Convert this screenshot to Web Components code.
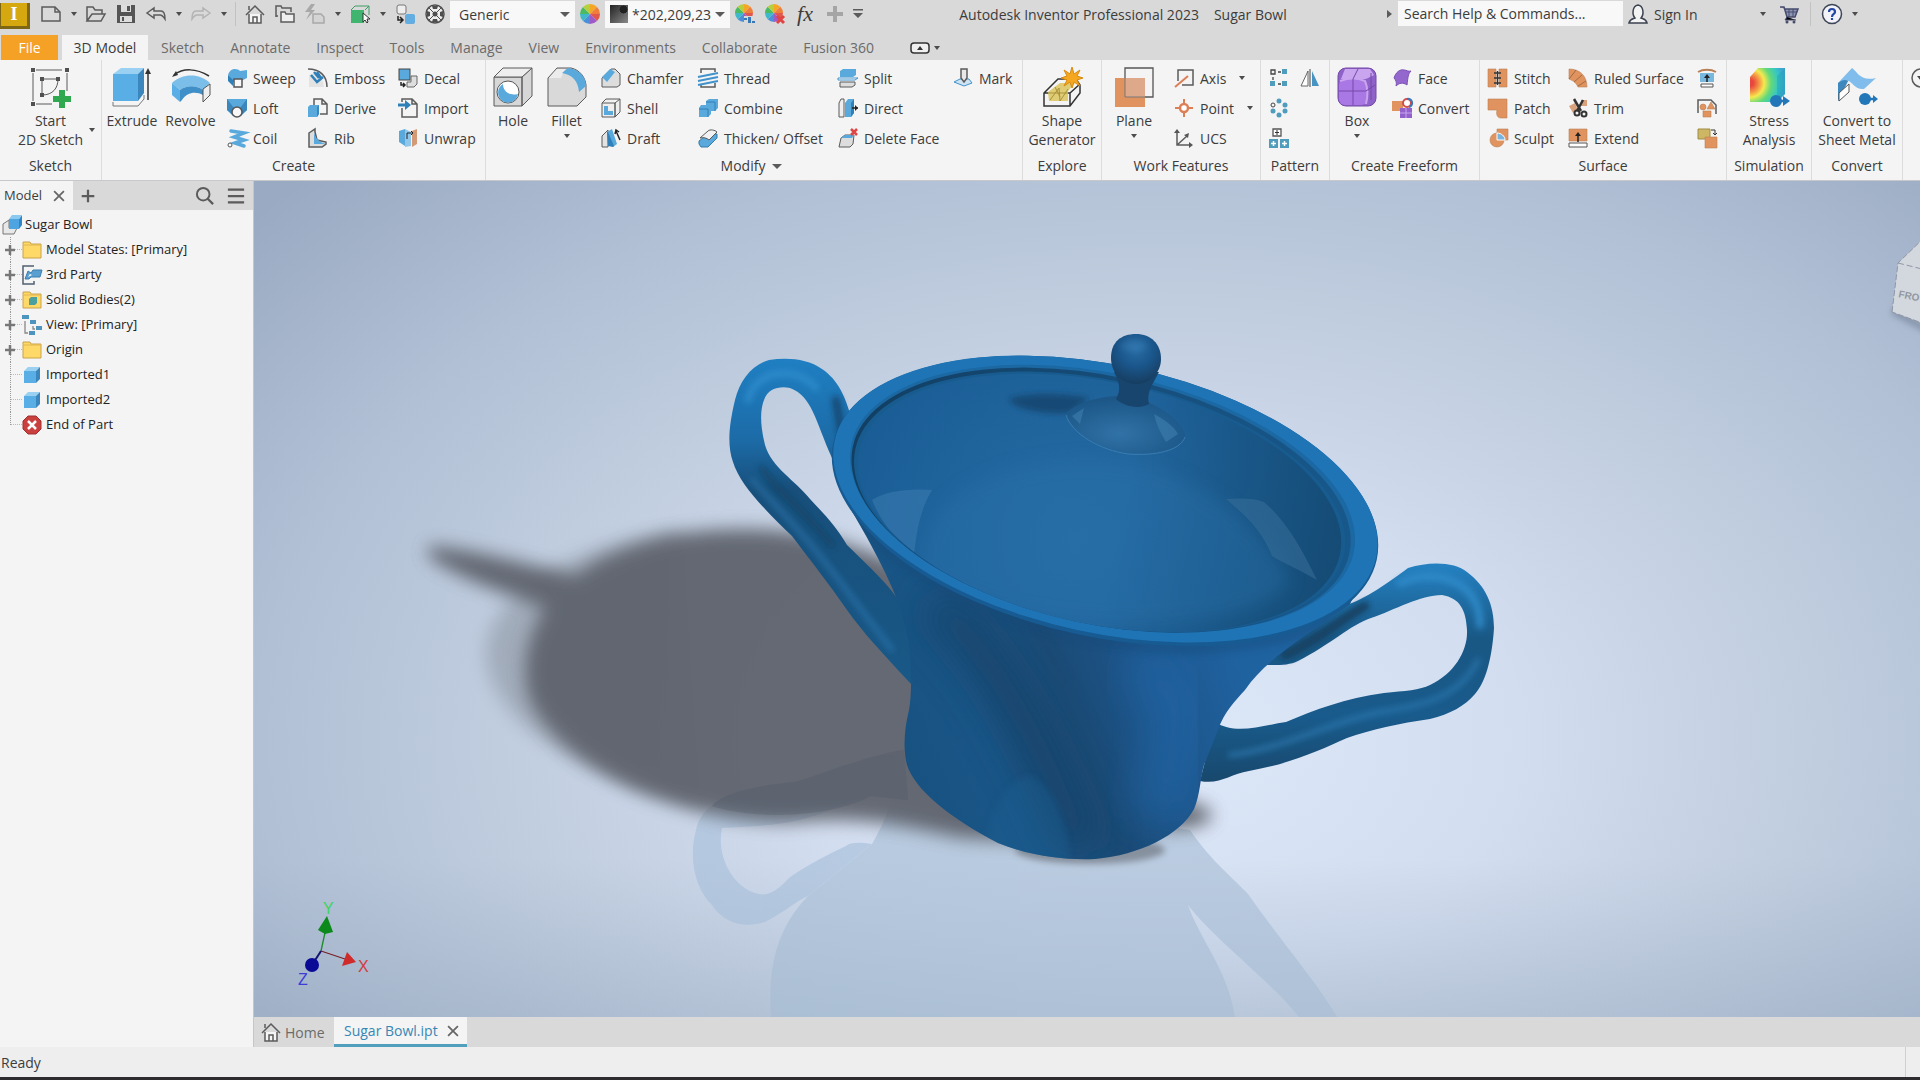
<!DOCTYPE html>
<html lang="en">
<head>
<meta charset="utf-8">
<title>Autodesk Inventor Professional 2023 - Sugar Bowl</title>
<style>
    html, body { margin: 0; height: 100%; }
    body {
        font: 14px/19px "Open Sans", "Noto Sans", sans-serif;
        color: #3c3c3c;
        background: #d9d9d9;
    }
</style>
</head>
<body>
<cad-app></cad-app>

<script>
const DARK = 'fill="none" stroke="#5b5b5b" stroke-width="1.5"';
const BLUE = 'fill="#5aa9dd"';
const ORANGE = 'fill="#e0935f" stroke="#b98056" stroke-width=".6"';

// colour wheel made of eight slices
const wheel = (cx, cy, r) => {
    const colors = ['#f5a623', '#ef7d3c', '#e2574c', '#a05ac8', '#4a90d9', '#3fb8c9', '#4cb963', '#b5cf3f'];
    return colors.map((color, i) => {
        const a = (i * Math.PI) / 4 - Math.PI / 2;
        const b = a + Math.PI / 4;
        return `<path fill="${color}" d="M${cx} ${cy}L${cx + r * Math.cos(a)} ${cy + r * Math.sin(a)}A${r} ${r} 0 0 1 ${cx + r * Math.cos(b)} ${cy + r * Math.sin(b)}Z"/>`;
    }).join('');
};

const cube = '<path fill="#5aaee6" d="M2 6h12v12H2z"/><path fill="#9ad0f2" d="M2 6l4-4h12l-4 4z"/><path fill="#3a86bd" d="M14 6l4-4v12l-4 4z"/>';
const folder = '<path d="M1 4.500V2h7l1 2h10v14H1z" fill="#ffd968" stroke="#c9a24a"/><path d="M1 5h18" stroke="#dfb551"/>';

// small icons are drawn on a 20 grid, the large ones on a 40 grid
const ICONS = {
    new: `<path ${DARK} fill="#f8f8f8" d="M1 3h13l5 5v9H1z"/><path ${DARK} d="M14 3v5h5"/>`,
    open: `<path ${DARK} d="M1 17V3h6l2 3h7v4M1 17l5-7h13l-4 7z"/>`,
    save: `<path fill="#555" d="M1 1h18v18H1z"/><path fill="#ddd" d="M5 1h10v7H5zM4 12h12v6H4z"/><path fill="#555" d="M11 2h3v5h-3zM6 13h2v4H6z"/>`,
    undo: `<path ${DARK} fill="#efefef" d="M1 9l7-5v3h7c3 0 4 3 4 8-2-3-3-4-5-4H8v3z"/>`,
    redo: `<g transform="matrix(-1 0 0 1 20 0)"><path fill="none" stroke="#b3b3b3" stroke-width="1.500" d="M1 9l7-5v3h7c3 0 4 3 4 8-2-3-3-4-5-4H8v3z"/></g>`,
    home: `<path fill="#f5f5f5" stroke="#5b5b5b" stroke-width="1.500" d="M4 10v9h12v-9"/><path ${DARK} stroke-width="2" d="M1 11l9-9 9 9"/><path ${DARK} d="M4 6V2M8 19v-6h4v6"/>`,
    folders: `<path ${DARK} d="M1 13V2h5l1 2h9v4M3 12H1"/><path fill="#eee" stroke="#5b5b5b" stroke-width="1.500" d="M6 18V8h4l1 2h8v8z"/>`,
    bolt: `<path fill="#a8a8a8" d="M6 0L0 8h5l-4 8 9-10H6l4-6z"/><path fill="#d4d4d4" stroke="#a8a8a8" stroke-width="1.500" d="M8 10h8l3 3v6H8z"/>`,
    select: `<path fill="#3fb56f" d="M1 6h13v13H1z"/><path fill="none" stroke="#3f9c65" d="M1 6l4-4h14l-4 4M5 2l-4 4M19 2v9"/><path fill="#fff" stroke="#333" d="M13 9v9l2-2 2 3 1-1-1-3h3z"/>`,
    swap: `<rect x="2" y="1" width="9" height="9" rx="2" fill="#eee" stroke="#777"/><rect x="10" y="10" width="10" height="10" rx="2" fill="#64ade0"/><path stroke="#222" stroke-width="1.500" fill="none" d="M3 12v4h4M5 13l3 3-3 3"/>`,
    mesh: `<circle cx="10" cy="10" r="9" fill="#eee" stroke="#4e4e4e" stroke-width="1.500"/><g fill="#4e4e4e"><circle cx="10" cy="10" r="2.500"/><path d="M7 2h6l-1 3H8zM7 18h6l-1-3H8zM2 7v6l3-1V8zM18 7v6l-3-1V8z"/></g><path stroke="#4e4e4e" d="M4 4l12 12M16 4L4 16"/>`,
    wheel: wheel(10, 10, 10),
    wheelAdjust: wheel(9, 9, 9) + '<path fill="#d9d9d9" d="M9 12h11v8H9z"/><path fill="#3878b8" d="M9 14h3v2H9zM13 13h3v6h-3zM17 17h3v2h-3z"/>',
    wheelClear: wheel(9, 9, 9) + '<path stroke="#e04545" stroke-width="3" d="M12 12l7 7M19 12l-7 7"/>',
    plus: '<path stroke="#a5a5a5" stroke-width="4" d="M10 2v16M2 10h16"/>',
    caret: '<path fill="#5b5b5b" d="M5 8h10l-5 5z"/>',
    smallCaret: '<path fill="#4c4c4c" d="M7 8h6l-3 4z"/>',
    barCaret: '<path fill="#5b5b5b" d="M5 5h10v1.500H5zM5 9h10l-5 5z"/>',
    sideCaret: '<path fill="#5b5b5b" d="M8 6v8l5-4z"/>',
    user: '<path fill="#f3f3f3" stroke="#3b4250" stroke-width="1.500" d="M1 19c1-4 4-4 6-5C4 11 4 2 10 1c6 1 6 10 3 13 2 1 5 1 6 5z"/>',
    cart: '<path fill="#8d95b5" stroke="#464c6c" stroke-width="1.500" d="M1 3h4l3 10h8l3-8H6"/><path stroke="#464c6c" d="M6 8h12M10 5v8M14 5v8M8 13l-2 3h11"/><circle cx="8" cy="18" r="1.500" fill="#464c6c"/><circle cx="15" cy="18" r="1.500" fill="#464c6c"/>',
    help: '<circle cx="10" cy="10" r="9.500" fill="#f1f3f8" stroke="#3d4456" stroke-width="1.500"/><path fill="none" stroke="#2446a5" stroke-width="2.200" d="M7 8c0-4 6-4 6 0 0 2-3 2-3 5M10 14v2"/>',
    collapse: '<rect x="1" y="5" width="18" height="10" rx="3" fill="#f0f0f0" stroke="#333" stroke-width="1.500"/><path fill="#333" d="M7 12h6l-3-4z"/>',
    close: '<path stroke="#666" stroke-width="2.500" d="M3 3l14 14M17 3L3 17"/>',
    add: '<path stroke="#5b5b5b" stroke-width="2.500" d="M10 3v14M3 10h14"/>',
    addNode: '<path stroke="#777" stroke-width="5" d="M10 0v20M0 10h20"/>',
    search: '<circle cx="8" cy="8" r="7" fill="none" stroke="#5b5b5b" stroke-width="2.200"/><path stroke="#5b5b5b" stroke-width="2.500" d="M13 13l6 6"/>',
    menu: '<path stroke="#5b5b5b" stroke-width="2.500" d="M1 3h18M1 10h18M1 17h18"/>',
    more: '<circle cx="12" cy="12" r="9" fill="#f4f4f4" stroke="#5b5b5b" stroke-width="1.500"/><path fill="#444" d="M8 10h8l-4 5z"/>',

    part: '<path fill="#e8e8e8" stroke="#777" d="M1 9l6-4v8h8l-3 6H1z"/><path fill="#4da4e0" d="M7 4h10v10H7z"/><path fill="#2f86c6" d="M17 4l3-4v10l-3 4z"/><path fill="#8ac8f0" d="M7 4l3-4h10l-3 4z"/>',
    folder,
    bodies: folder + '<path fill="#4c9f9f" d="M7 9l2-2h6v6l-2 2H7z"/>',
    party: '<path fill="none" stroke="#4f5f72" stroke-width="1.500" d="M12 1H1v18h11v-3"/><path fill="#5a9fd0" stroke="#3b7fae" d="M3 14l3-8 3 2 2-3h9l-2 7H9l-2 2z"/><path fill="#fff" d="M6 12l2-3 2 1z"/>',
    view: '<path fill="none" stroke="#888" stroke-width="1.300" d="M3 6v12h3M8 6h2M11 11v3h2"/><g fill="#4d94bf"><path d="M0 0h7v4H0zM8 5h6v4H8zM14 11h6v4h-6zM7 16h6v4H7z"/></g>',
    cube,
    end: '<path fill="#c9403f" stroke="#a23030" d="M6 1h8l5 5v8l-5 5H6l-5-5V6z"/><path stroke="#fff" stroke-width="2.500" d="M6 6l8 8M14 6l-8 8"/>',

    sketch: `<g fill="none" stroke="#5a5a5a"><path d="M6 3h26M3 6v28M6 37h16M37 6v18M12 12v16M12 12h16c0 9-5 16-16 16"/></g><g fill="#505050"><path d="M1 1h4v4H1zM35 1h4v4h-4zM1 35h4v4H1zM10 10h4v4h-4zM26 10h4v4h-4zM10 26h4v4h-4z"/></g><path stroke="#2fa84f" stroke-width="6" d="M32 23v18M23 32h18"/>`,
    extrude: '<path fill="#f4f4f4" stroke="#777" d="M1 35v4h25l6-7v-4"/><path fill="#5aaee6" d="M1 7h25v27H1z"/><path fill="#9ad0f2" d="M1 7l8-6h23l-6 6z"/><path fill="#3a86bd" d="M26 7l6-6v25l-6 8z"/><path stroke="#333" stroke-width="1.500" d="M36 5v28"/><path fill="#333" d="M33 7l3-6 3 6z"/>',
    revolve: '<path fill="#7cbeea" d="M1 16c10-10 28-10 38 0l-7 7c-7-5-16-5-23 0z"/><path fill="#5aaee6" d="M1 16l8 7v12l-8-7z"/><path fill="#3f8fc8" d="M9 23c7-5 16-5 23 0v5c-7-4-16-3-21 5l-2 2z"/><path fill="#eee" stroke="#555" d="M32 22l7-5v11l-7 7z"/><path fill="none" stroke="#333" stroke-width="1.500" d="M3 8c9-7 22-7 35 1"/><path fill="#333" d="M1 10l4-6 2 4z"/>',
    sweep: `<path ${BLUE} d="M1 7c2-7 9-7 12-4l7-1v8l-8 4H6z"/><path fill="#2f80b8" d="M1 7l5 5v6l-5-5z"/><rect x="7" y="11" width="8" height="8" fill="#f8f8f8" stroke="#555" stroke-width="1.500"/>`,
    loft: `<path ${BLUE} d="M0 1h20v11l-6 6H6l-6-6z"/><path fill="#3a86bd" d="M0 1l7 9v8l-7-6zM20 1l-7 9v8l7-6z"/><circle cx="10" cy="14" r="5" fill="#f8f8f8" stroke="#555" stroke-width="1.500"/>`,
    coil: '<g fill="none" stroke="#5aa9dd" stroke-width="3.500" stroke-linecap="round"><path d="M4 3l13 2-10 4 10 3-9 3 9 3"/></g><circle cx="3" cy="17" r="2" fill="#fff" stroke="#555"/>',
    emboss: `<path fill="#e3e3e3" d="M1 7c8-4 14 2 15 12H1z"/><path ${DARK} d="M0 1c12 0 19 7 19 18"/><path stroke="#2f80b8" stroke-width="2.500" fill="none" d="M3 7l6 7 6-5M6 4l5 6M9 4l4 6"/>`,
    derive: `<path ${DARK} fill="#fff" d="M6 8V1h8l5 5v10h-7M14 1v5h5"/><path ${BLUE} d="M0 9l2-2h9v9l-2 3H0z"/><path fill="#3a86bd" d="M9 9l2-2v9l-2 3z"/>`,
    rib: `<path fill="#ddd" stroke="#5b5b5b" stroke-width="1.500" d="M1 5l6-4v3l2 8 9 2v2l-4 3H1z"/><path ${BLUE} d="M6 4c1 6 5 10 12 12H6z"/>`,
    decal: `<rect x="1" y="1" width="11" height="11" ${BLUE} stroke="#444"/><path fill="#dedede" stroke="#666" d="M13 8h6v8l-3 3H9v-5h4z"/><path fill="none" stroke="#222" stroke-width="1.500" d="M3 14v3h4M5 15l2 2-2 2"/>`,
    import: `<path ${DARK} fill="#fff" d="M4 10v9h15V6l-5-5H4v3M14 1v5h5"/><path stroke="#2f80b8" stroke-width="3" d="M0 7h8"/><path fill="#2f80b8" d="M7 2l6 5-6 5z"/>`,
    unwrap: '<path fill="#5aa9dd" d="M1 3l6-2v17l-6-4z"/><path fill="#8fc6ea" d="M7 1l6 3v14l-6 1z"/><path fill="#d39a78" d="M14 3l5-2v15l-5 3z"/><path fill="none" stroke="#222" d="M9 11V5h6M13 3l2 2-2 2"/>',
    hole: '<path fill="#d7d7d7" stroke="#5b5b5b" d="M1 10h28v29H1zM29 10L39 1v28l-10 10z"/><path fill="#eee" stroke="#5b5b5b" d="M1 10l9-9h29l-10 9z"/><circle cx="15" cy="25" r="11" fill="#fff" stroke="#555"/><path fill="#5aa9dd" d="M10 17a10 10 0 1 0 15 10c-8 2-15-2-15-10z"/>',
    fillet: '<path fill="#d9d9d9" stroke="#5b5b5b" d="M1 11l9-10h14c9 2 14 9 15 17v12l-9 9H1z"/><path fill="#ececec" d="M2 11l8-9h8l-4 9z"/><path fill="#5aa9dd" d="M15 6l6-5c11 1 18 9 18 18l-7 6C31 14 26 8 15 6z"/>',
    chamfer: '<path fill="#ddd" stroke="#5b5b5b" d="M1 10l9-9h4l5 5v11l-3 2H1z"/><path fill="#5aa9dd" d="M1 9l8-8 5 3-8 10z"/>',
    shell: '<path fill="#efefef" stroke="#5b5b5b" d="M1 5h13v14H1zM1 5l4-4h14v13l-5 5V5l5-4"/><path fill="#5aa9dd" d="M3 8h4v5h5v4H3z"/>',
    draft: '<path fill="#e3e3e3" stroke="#5b5b5b" d="M1 19V8l6-6v17z"/><path fill="#5aa9dd" d="M6 4l5-3 5 15-4 3z"/><path fill="#2f80b8" d="M6 4l1 0 6 14-1 1-5-1z"/><path stroke="#222" stroke-width="1.500" fill="none" d="M19 12l-4-9m-1 3l1-4 3 2"/>',
    thread: '<path fill="none" stroke="#5b5b5b" stroke-width="1.500" d="M3 5V1h14v3M3 16v3h14v-4"/><path stroke="#3f92cb" stroke-width="2" d="M0 9l20-4M0 13l20-4M0 17l20-4"/>',
    combine: '<path fill="#5aa9dd" d="M8 3l3-2h9v9l-3 3h-4v3l-3 3H1v-9l2-3h5z"/><path fill="none" stroke="#2f80b8" d="M8 4h9v9M1 11h9v8"/>',
    thicken: '<path fill="#5aa9dd" stroke="#377ba8" d="M1 13l9-7h9v4l-9 9H3l-2-3z"/><path fill="#f2f2f2" stroke="#5b5b5b" d="M2 10l8-7c2-2 7-1 9 1l-8 8c-2-2-6-3-9-2z"/>',
    split: '<path fill="#5aa9dd" d="M2 3l3-2h13v6l-3 2H2z"/><path stroke="#3f92cb" fill="#fff" d="M0 10h20l-3 2H0z"/><path fill="#ddd" stroke="#5b5b5b" d="M2 14h15v3l-3 2H2z"/>',
    direct: '<path fill="#eee" stroke="#5b5b5b" d="M6 1H3L1 5v14h5z"/><path fill="#5aa9dd" d="M7 5l3-4h6v14l-3 4H7z"/><path fill="#2f80b8" d="M13 5l3-4v14l-3 4z"/><path stroke="#222" stroke-width="1.500" d="M14 10h6"/><path fill="#222" d="M17 7l3 3-3 3z"/>',
    deleteFace: '<path fill="#ddd" stroke="#5b5b5b" d="M3 10l4-3h9l-1 9-3 3H1z"/><path fill="#5aa9dd" d="M3 10l4-3h9l-2 3z"/><path stroke="#e04545" stroke-width="2.500" d="M13 1l6 6M19 1l-6 6"/>',
    mark: '<path fill="#cfe4f3" stroke="#3f92cb" d="M1 14l6-3h9l3 4-8 3z"/><path fill="#e8e8e8" stroke="#5b5b5b" stroke-width="1.500" d="M8 1h6v9l-3 4-3-4z"/>',
    shape: '<path fill="none" stroke="#333" stroke-width="1.500" d="M2 26l14-14h18l4 6v8L28 39H2zM2 26h26l10-9M28 26v13"/><path fill="#d9c255" opacity=".8" d="M6 25l12-9h15l-7 8v10H7z"/><path fill="none" stroke="#a99238" d="M8 33l9-12 1 13 8-12M13 20l5 10"/><path fill="#f5a81f" stroke="#d98b10" d="M30 0l2 7 6-4-3 6 6 2-6 2 3 6-6-4-2 6-2-6-6 4 3-6-6-2 6-2-3-6 6 4z"/>',
    plane: '<path fill="none" stroke="#555" stroke-width="1.300" d="M11 11V1h28v29h-8"/><path fill="#e0935f" d="M1 11h30v29H1z"/><path fill="#dda98a" d="M11 11h20v19H11z"/><path fill="none" stroke="#777" d="M11 11v19h20"/>',
    axis: `<path ${DARK} d="M4 13V2h15v15H8"/><path stroke="#dd7f55" stroke-width="2" d="M1 19L14 8"/>`,
    point: '<circle cx="10" cy="10" r="4" fill="#fff" stroke="#dd7f55" stroke-width="2.500"/><path stroke="#dd7f55" stroke-width="2" d="M10 1v5M10 14v5M1 10h5M14 10h5"/>',
    ucs: `<path ${DARK} d="M3 3v14h14M3 17L13 8"/><path fill="#555" d="M0 5l3-4 3 4zM15 14l4 3-4 3zM10 7l5-2-1 5z"/>`,
    patternRect: '<path fill="none" stroke="#444" stroke-width="1.300" d="M2 2h4v4H2zM9 4h3M4 9v3M9 16h3"/><g fill="#4f9cbc"><path d="M13 1h5v5h-5zM1 13h5v5H1zM13 13h5v5h-5z"/></g>',
    patternCircle: '<circle cx="4" cy="7" r="2" fill="none" stroke="#444"/><g fill="#4f9cbc"><circle cx="10" cy="3" r="2.500"/><circle cx="16" cy="7" r="2.500"/><circle cx="16" cy="13" r="2.500"/><circle cx="10" cy="17" r="2.500"/><circle cx="4" cy="13" r="2.500"/></g>',
    patternSketch: '<path fill="#fff" stroke="#555" stroke-width="1.300" d="M4 1h8v7H4z"/><path stroke="#333" d="M8 2v5M6 4.500h4"/><path fill="#4f9cbc" d="M0 11h9v9H0zM11 11h9v9h-9z"/><path stroke="#fff" stroke-width="1.500" d="M4.500 13v5M2 15.500h5M15.500 13v5M13 15.500h5"/>',
    mirror: '<path fill="#fff" stroke="#666" d="M8 3v15H1z"/><path fill="#4794c2" d="M12 3v15h7z"/><path stroke="#444" d="M10 1v18"/>',
    box: '<rect x="1" y="1" width="38" height="38" rx="8" fill="#8f62c9" stroke="#7448a8"/><path fill="#c9a5ef" d="M8 2h25l4 6-8 4H4z"/><rect x="2" y="12" width="28" height="26" rx="6" fill="#aa78e4"/><path fill="none" stroke="#c9a5ef" stroke-width="2" d="M3 14c8-3 18-3 25 0 3 7 3 15 1 23"/><path fill="none" stroke="#7448a8" d="M16 12v26M2 24h27l9-6M16 12l5-10M34 6v27"/>',
    face: '<path fill="#9467cf" stroke="#7b52b3" d="M2 10C4 4 8 1 12 2c3 0 4 2 7 1-3 3-3 6-4 14-4-3-8-2-11 1 1-3 0-6-2-8z"/>',
    convert: '<path fill="#e0935f" d="M0 3h11v10H0z"/><path fill="#9261cb" d="M8 10h12v10H8z"/><path stroke="#c9a5ef" d="M14 10v10M8 15h12"/><circle cx="15" cy="5" r="4" fill="#fff" stroke="#d24d4d" stroke-width="2"/><path fill="none" stroke="#3878b8" stroke-width="2" d="M15 1a4 4 0 0 1 2 8"/>',
    stitch: `<path ${ORANGE} d="M0 1h8v18H0zM11 1h8v18h-8z"/><path stroke="#333" stroke-width="1.300" d="M9.500 3v14M6 5h7M6 10h7M6 15h7"/>`,
    patch: `<path ${ORANGE} d="M0 1h19v19h-6c-4 0-5-4-4-8H0z"/>`,
    sculpt: `<path ${ORANGE} d="M9 1h11v11h-4a7 7 0 1 1-7-7z"/><path fill="#79b4de" stroke="#fff" d="M9 5v7h8c0-4-4-7-8-7z"/>`,
    ruled: `<path ${ORANGE} d="M1 1c11 0 18 7 18 18h-9C8 15 6 13 1 11z"/><path fill="none" stroke="#a36b40" d="M1 11L8 2M6 14l8-7M10 18l8-5"/>`,
    trim: '<path fill="#d9a27c" d="M1 8l6-3 3 7-5 3zM13 2h6v6h-6z"/><path stroke="#333" stroke-width="2.500" d="M6 1l7 12M15 2L9 13"/><circle cx="9" cy="15" r="2.500" fill="none" stroke="#333" stroke-width="2"/><circle cx="16" cy="16" r="2.500" fill="none" stroke="#333" stroke-width="2"/>',
    extend: `<path ${ORANGE} d="M1 1h18v12H1z"/><path fill="#fff" stroke="#555" d="M1 15h18v4H1z"/><path stroke="#222" stroke-width="1.500" d="M10 14V6"/><path fill="#222" d="M7 8l3-4 3 4z"/>`,
    offsetUp: '<path fill="none" stroke="#b98056" stroke-width="2" d="M1 4c5-3 13-3 18 0"/><path fill="#78b7de" d="M3 5h14v9H3z"/><path fill="#fff" stroke="#555" d="M4 16h12v3H4z"/><path stroke="#222" stroke-width="1.500" d="M10 14V8"/><path fill="#222" d="M7 10l3-4 3 4z"/>',
    repair: `<path ${DARK} d="M1 15V2h13l5 5v9"/><circle cx="6" cy="9" r="3" ${ORANGE}/><path ${ORANGE} d="M10 11l4-7 4 7zM6 13h8v6H6z"/>`,
    replace: `<path fill="#cdb765" stroke="#a08c45" d="M1 1h12v10H1z"/><path ${ORANGE} d="M8 9h12v11H8z"/><path fill="none" stroke="#333" d="M14 2h4v5M16 5l2 2 2-2"/>`,
    stress: `<radialGradient id="heat" gradientUnits="userSpaceOnUse" cx="1" cy="16" r="34">
            <stop offset=".1" stop-color="#e8473d"/><stop offset=".28" stop-color="#f59b45"/><stop offset=".42" stop-color="#f4e94f"/>
            <stop offset=".62" stop-color="#62d97a"/><stop offset=".85" stop-color="#35c6c6"/><stop offset="1" stop-color="#3fa6d0"/>
        </radialGradient>
        <path fill="url(#heat)" d="M1 10l8-9h27v26l-8 8H1z"/><path fill="#1f9fb5" opacity=".45" d="M28 9l8-8v26l-8 8z"/><circle cx="27" cy="34" r="6" fill="#2277b8"/><path stroke="#2277b8" stroke-width="2.500" d="M30 34h7"/><path fill="#2277b8" d="M34 29l7 5-7 5z"/>`,
    sheet: '<path fill="#80bdec" d="M1 16L15 1c5 3 8 14 24 10L27 22c-9 1-11-7-16-8L1 34z"/><path fill="#3f88bd" d="M1 16c4-3 7-4 10-2L1 34z"/><path fill="#fff" stroke="#555" d="M2 26l10-9v8L2 34z"/><circle cx="28" cy="32" r="6" fill="#2277b8"/><path stroke="#2277b8" stroke-width="2.500" d="M30 32h8"/><path fill="#2277b8" d="M36 28l5 4-5 4z"/>',
};

class CadIcon extends HTMLElement {
    constructor() {
        super();
        this.attachShadow({ mode: 'open' });
    }

    connectedCallback() {
        const grid = this.hasAttribute('large') ? 40 : 20;
        this.shadowRoot.innerHTML = `
            <style>
                :host { display: block; flex: none; width: ${grid}px; height: ${grid}px; }
                svg { display: block; width: 100%; height: 100%; overflow: visible; }
            </style>
            <svg viewBox="0 0 ${grid} ${grid}" aria-hidden="true">${ICONS[this.getAttribute('name')]}</svg>
        `;
    }
}

class CadTool extends HTMLElement {
    constructor() {
        super();
        this.attachShadow({ mode: 'open' });
    }

    connectedCallback() {
        const icon = this.getAttribute('icon');
        const large = this.hasAttribute('large');
        const menu = this.getAttribute('menu');
        const hint = this.getAttribute('hint');
        this.shadowRoot.innerHTML = `
            <style>
                :host { display: flex; min-width: 0; }
                button {
                    flex: 1;
                    min-width: 0;
                    display: flex;
                    align-items: center;
                    gap: 6px;
                    padding: 0 0 0 8px;
                    border: 0;
                    background: none;
                    font: inherit;
                    color: inherit;
                    text-align: left;
                    white-space: nowrap;
                }
                button.large {
                    display: grid;
                    grid-template-columns: minmax(0, 1fr) auto minmax(0, 1fr);
                    grid-template-rows: 40px auto;
                    align-content: start;
                    justify-items: center;
                    gap: 4px 0;
                    padding: 4px 0 0;
                    text-align: center;
                }
                .large cad-icon:first-child, .large .label { grid-column: 2; }
                .large .side { grid-column: 3; align-self: center; }
                .large .below { grid-column: 2; margin-top: -8px; }
            </style>
            <button class="${large ? 'large' : ''}" ${hint ? `aria-label="${hint}"` : ''}>
                <cad-icon name="${icon}" ${large ? 'large' : ''}></cad-icon>
                ${hint ? '' : '<span class="label"><slot></slot></span>'}
                ${menu ? `<cad-icon class="${menu}" name="smallCaret"></cad-icon>` : ''}
            </button>
        `;
    }
}

class CadPanel extends HTMLElement {
    constructor() {
        super();
        this.attachShadow({ mode: 'open' });
    }

    connectedCallback() {
        this.shadowRoot.innerHTML = `
            <style>
                :host { display: flex; flex-direction: column; flex: none; padding-top: 3px; border-right: 1px solid #dcdcdc; }
                .tools {
                    display: grid;
                    grid-auto-flow: column;
                    grid-template-rows: repeat(3, 30px);
                    grid-template-columns: ${this.getAttribute('columns')};
                }
                ::slotted([large]) { grid-row: span 3; }
                footer { display: flex; align-items: center; justify-content: center; gap: 2px; height: 25px; }
            </style>
            <div class="tools"><slot></slot></div>
            <footer>${this.getAttribute('label')}${this.hasAttribute('menu') ? '<cad-icon name="caret"></cad-icon>' : ''}</footer>
        `;
    }
}

class CadRibbon extends HTMLElement {
    constructor() {
        super();
        this.attachShadow({ mode: 'open' });
    }

    connectedCallback() {
        this.shadowRoot.innerHTML = `
            <style>
                :host { display: flex; height: 120px; overflow: hidden; background: #f4f4f4; border-bottom: 1px solid #c6c8cc; }
                cad-icon[name=more] { margin: 6px 0 0 6px; }
            </style>
            <cad-panel label="Sketch" columns="101px">
                <cad-tool icon="sketch" large menu="side">Start<br>2D Sketch</cad-tool>
            </cad-panel>
            <cad-panel label="Create" columns="60px 57px 81px 90px 95px">
                <cad-tool icon="extrude" large>Extrude</cad-tool>
                <cad-tool icon="revolve" large>Revolve</cad-tool>
                <cad-tool icon="sweep">Sweep</cad-tool>
                <cad-tool icon="loft">Loft</cad-tool>
                <cad-tool icon="coil">Coil</cad-tool>
                <cad-tool icon="emboss">Emboss</cad-tool>
                <cad-tool icon="derive">Derive</cad-tool>
                <cad-tool icon="rib">Rib</cad-tool>
                <cad-tool icon="decal">Decal</cad-tool>
                <cad-tool icon="import">Import</cad-tool>
                <cad-tool icon="unwrap">Unwrap</cad-tool>
            </cad-panel>
            <cad-panel label="Modify" menu columns="54px 53px 97px 140px 115px 77px">
                <cad-tool icon="hole" large>Hole</cad-tool>
                <cad-tool icon="fillet" large menu="below">Fillet</cad-tool>
                <cad-tool icon="chamfer">Chamfer</cad-tool>
                <cad-tool icon="shell">Shell</cad-tool>
                <cad-tool icon="draft">Draft</cad-tool>
                <cad-tool icon="thread">Thread</cad-tool>
                <cad-tool icon="combine">Combine</cad-tool>
                <cad-tool icon="thicken">Thicken/ Offset</cad-tool>
                <cad-tool icon="split">Split</cad-tool>
                <cad-tool icon="direct">Direct</cad-tool>
                <cad-tool icon="deleteFace">Delete Face</cad-tool>
                <cad-tool icon="mark">Mark</cad-tool>
            </cad-panel>
            <cad-panel label="Explore" columns="78px">
                <cad-tool icon="shape" large>Shape<br>Generator</cad-tool>
            </cad-panel>
            <cad-panel label="Work Features" columns="64px 94px">
                <cad-tool icon="plane" large menu="below">Plane</cad-tool>
                <cad-tool icon="axis" menu="after">Axis</cad-tool>
                <cad-tool icon="point" menu="after">Point</cad-tool>
                <cad-tool icon="ucs">UCS</cad-tool>
            </cad-panel>
            <cad-panel label="Pattern" columns="31px 37px">
                <cad-tool icon="patternRect" hint="Rectangular"></cad-tool>
                <cad-tool icon="patternCircle" hint="Circular"></cad-tool>
                <cad-tool icon="patternSketch" hint="Sketch Driven"></cad-tool>
                <cad-tool icon="mirror" hint="Mirror"></cad-tool>
            </cad-panel>
            <cad-panel label="Create Freeform" columns="54px 95px">
                <cad-tool icon="box" large menu="below">Box</cad-tool>
                <cad-tool icon="face">Face</cad-tool>
                <cad-tool icon="convert">Convert</cad-tool>
            </cad-panel>
            <cad-panel label="Surface" columns="80px 129px 37px">
                <cad-tool icon="stitch">Stitch</cad-tool>
                <cad-tool icon="patch">Patch</cad-tool>
                <cad-tool icon="sculpt">Sculpt</cad-tool>
                <cad-tool icon="ruled">Ruled Surface</cad-tool>
                <cad-tool icon="trim">Trim</cad-tool>
                <cad-tool icon="extend">Extend</cad-tool>
                <cad-tool icon="offsetUp" hint="Thicken"></cad-tool>
                <cad-tool icon="repair" hint="Repair Bodies"></cad-tool>
                <cad-tool icon="replace" hint="Replace Face"></cad-tool>
            </cad-panel>
            <cad-panel label="Simulation" columns="84px">
                <cad-tool icon="stress" large>Stress<br>Analysis</cad-tool>
            </cad-panel>
            <cad-panel label="Convert" columns="90px">
                <cad-tool icon="sheet" large>Convert to<br>Sheet Metal</cad-tool>
            </cad-panel>
            <cad-icon name="more"></cad-icon>
        `;
    }
}

class CadTitleBar extends HTMLElement {
    constructor() {
        super();
        this.attachShadow({ mode: 'open' });
    }

    connectedCallback() {
        const icon = (name, label) => `<button class="icon" aria-label="${label}"><cad-icon name="${name}"></cad-icon></button>`;
        const drop = (label) => `<button class="drop" aria-label="${label}"><cad-icon name="smallCaret"></cad-icon></button>`;
        this.shadowRoot.innerHTML = `
            <style>
                :host { display: flex; align-items: flex-start; height: 35px; background: #d9d9d9; }
                .group { display: flex; align-items: center; height: 28px; }
                button { display: flex; align-items: center; justify-content: center; padding: 0; border: 0; background: none; font: inherit; color: inherit; }
                .icon { width: 30px; height: 28px; }
                .drop { width: 15px; height: 28px; }
                .logo {
                    width: 26px; height: 23px; margin: 3px 6px 0 0;
                    border: solid #7d6614; border-width: 0 3px 3px 1px;
                    background: #d6a80f; color: #fff;
                    font: bold 18px/23px "Liberation Serif", serif; text-align: center;
                }
                i { width: 1px; height: 24px; margin: 0 4px; background: #c2c2c2; }
                .end i { margin: 0 6px; }
                .field { display: flex; align-items: center; width: 125px; height: 27px; background: #f8f8f8; box-sizing: border-box; padding-left: 9px; }
                .field.swatch { padding-left: 5px; gap: 4px; }
                .field cad-icon { margin-left: -6px; }
                .swatch cad-icon { margin-left: -12px; }
                .swatch span { width: 18px; height: 18px; background: radial-gradient(circle at 75% 25%, #222 20%, transparent 22%), linear-gradient(135deg, #222, #8a8a8a); }
                select { flex: 1; min-width: 0; appearance: none; border: 0; padding: 0; background: none; font: inherit; color: inherit; }
                .fx { font: italic 22px/24px "Liberation Serif", serif; }
                h1 { flex: 1; display: flex; justify-content: center; gap: 15px; margin: 0; font: inherit; line-height: 29px; white-space: nowrap; }
                input { width: 225px; height: 25px; margin: 0 0 2px 2px; box-sizing: border-box; border: 0; padding: 0 6px; background: #f8f8f8; font: inherit; }
                input::placeholder { color: #3c3c3c; opacity: 1; }
                .sign { width: 132px; justify-content: flex-start; gap: 6px; padding-left: 5px; box-sizing: border-box; }
                .end { padding-right: 58px; }
                .end .drop:has(+ .icon) { margin-right: 4px; }
            </style>
            <div class="group">
                <div class="logo">I</div>
                ${icon('new', 'New')}${drop('New options')}
                ${icon('open', 'Open')}${icon('save', 'Save')}
                ${icon('undo', 'Undo')}${drop('Undo history')}
                ${icon('redo', 'Redo')}${drop('Redo history')}
                <i></i>
                ${icon('home', 'Home')}${icon('folders', 'Projects')}
                ${icon('bolt', 'Update')}${drop('Update options')}
                ${icon('select', 'Select')}${drop('Select options')}
                ${icon('swap', 'Material')}${icon('mesh', 'Appearance')}
                <label class="field"><select aria-label="Material"><option>Generic</option></select><cad-icon name="caret"></cad-icon></label>
                ${icon('wheel', 'Appearance browser')}
                <label class="field swatch"><span></span><select aria-label="Appearance"><option>*202,209,23</option></select><cad-icon name="caret"></cad-icon></label>
                ${icon('wheelAdjust', 'Adjust')}${icon('wheelClear', 'Clear')}
                <button class="icon fx">fx</button>
                ${icon('plus', 'Add')}
                <button class="drop" aria-label="Customize"><cad-icon name="barCaret"></cad-icon></button>
            </div>
            <h1><span>Autodesk Inventor Professional 2023</span><span>Sugar Bowl</span></h1>
            <div class="group end">
                <button class="drop" aria-label="Expand"><cad-icon name="sideCaret"></cad-icon></button>
                <input type="search" aria-label="Search" placeholder="Search Help &amp; Commands...">
                <button class="sign"><cad-icon name="user"></cad-icon>Sign In</button>
                ${drop('Account')}${icon('cart', 'Store')}
                <i></i>
                ${icon('help', 'Help')}${drop('Help options')}
            </div>
        `;
    }
}

class CadTabs extends HTMLElement {
    constructor() {
        super();
        this.attachShadow({ mode: 'open' });
    }

    connectedCallback() {
        const tabs = ['Sketch', 'Annotate', 'Inspect', 'Tools', 'Manage', 'View', 'Environments', 'Collaborate', 'Fusion 360'];
        this.shadowRoot.innerHTML = `
            <style>
                :host { display: flex; align-items: stretch; height: 25px; padding-left: 1px; background: #d9d9d9; }
                button { display: flex; align-items: center; border: 0; padding: 0 13px; background: none; font: inherit; color: #6b6b6b; white-space: nowrap; }
                .file { width: 57px; justify-content: center; margin-right: 4px; background: #f5a125; color: #fff; }
                .active { width: 86px; padding: 0; justify-content: center; background: #f4f4f4; color: #3c3c3c; }
                .collapse { padding: 0 0 0 23px; }
                .collapse cad-icon + cad-icon { margin-left: -3px; }
            </style>
            <button class="file">File</button>
            <button class="active">3D Model</button>
            ${tabs.map((tab) => `<button>${tab}</button>`).join('')}
            <button class="collapse" aria-label="Minimize ribbon"><cad-icon name="collapse"></cad-icon><cad-icon name="smallCaret"></cad-icon></button>
        `;
    }
}

class CadBrowser extends HTMLElement {
    constructor() {
        super();
        this.attachShadow({ mode: 'open' });
    }

    connectedCallback() {
        const nodes = [
            ['folder', 'Model States: [Primary]', true],
            ['party', '3rd Party', true],
            ['bodies', 'Solid Bodies(2)', true],
            ['view', 'View: [Primary]', true],
            ['folder', 'Origin', true],
            ['cube', 'Imported1'],
            ['cube', 'Imported2'],
            ['end', 'End of Part'],
        ];
        this.shadowRoot.innerHTML = `
            <style>
                :host { display: block; background: #f4f4f4; font-size: 13px; color: #222; }
                header { display: flex; align-items: center; height: 29px; background: #d9d9d9; }
                button { display: flex; align-items: center; border: 0; padding: 0; background: none; }
                header div { display: flex; align-items: center; gap: 10px; width: 73px; height: 29px; padding-left: 4px; box-sizing: border-box; background: #f4f4f4; color: #3c3c3c; }
                header cad-icon { width: 18px; height: 18px; }
                header div cad-icon { width: 14px; height: 14px; }
                .add { margin: 0 auto 0 6px; }
                .find { margin-right: 13px; }
                .list { margin-right: 8px; }
                .root { display: flex; align-items: center; gap: 3px; height: 25px; padding: 2px 0 0 2px; }
                ul { margin: 0; padding: 0; list-style: none; }
                li { display: flex; align-items: center; height: 25px; }
                /* dotted guide lines joining the nodes */
                li::before { content: ""; width: 12px; height: 25px; margin-left: 10px; box-sizing: border-box; border-left: 1px dotted #999; background: linear-gradient(90deg, #bbb 50%, transparent 50%) 0 12px / 2px 1px repeat-x; }
                li:last-child::before { height: 13px; align-self: flex-start; }
                li cad-icon { width: 20px; height: 20px; margin-right: 4px; }
                li button { width: 10px; margin: 0 7px 0 -17px; }
                li button cad-icon { width: 10px; height: 10px; margin: 0; }
            </style>
            <header>
                <div>Model<button aria-label="Close"><cad-icon name="close"></cad-icon></button></div>
                <button class="add" aria-label="Add"><cad-icon name="add"></cad-icon></button>
                <button class="find" aria-label="Find"><cad-icon name="search"></cad-icon></button>
                <button class="list" aria-label="Menu"><cad-icon name="menu"></cad-icon></button>
            </header>
            <div class="root"><cad-icon name="part"></cad-icon>Sugar Bowl</div>
            <ul>
                ${nodes.map(([icon, label, open]) => `<li>${open ? '<button aria-label="Expand"><cad-icon name="addNode"></cad-icon></button>' : ''}<cad-icon name="${icon}"></cad-icon>${label}</li>`).join('')}
            </ul>
        `;
    }
}

class CadViewport extends HTMLElement {
    constructor() {
        super();
        this.attachShadow({ mode: 'open' });
    }

    connectedCallback() {
        this.shadowRoot.innerHTML = `
            <style>
                :host { display: block; position: relative; min-height: 0; overflow: hidden; background: #b0bed4; }
                svg { position: absolute; inset: 0; width: 100%; height: 100%; }
                text { font-family: "Liberation Sans", sans-serif; }
            </style>
            <svg viewBox="254 181 1666 836" preserveAspectRatio="xMidYMid slice" role="img" aria-label="Sugar bowl model">
                <defs>
                    <radialGradient id="floor" gradientUnits="userSpaceOnUse" cx="0" cy="0" r="1" gradientTransform="translate(1160 740) scale(1200 800)">
                        <stop offset="0" stop-color="#dde8f9"/>
                        <stop offset=".3" stop-color="#d2ddef"/>
                        <stop offset=".55" stop-color="#c0cddf"/>
                        <stop offset=".75" stop-color="#b1c0d5"/>
                        <stop offset="1" stop-color="#9aaac2"/>
                    </radialGradient>
                    <linearGradient id="front" x1="0" y1="0" x2="0" y2="1">
                        <stop offset="0" stop-color="#8397af" stop-opacity="0"/>
                        <stop offset="1" stop-color="#8397af" stop-opacity=".35"/>
                    </linearGradient>
                    <linearGradient id="body" gradientUnits="userSpaceOnUse" x1="905" y1="760" x2="1230" y2="640">
                        <stop offset="0" stop-color="#175281"/>
                        <stop offset=".25" stop-color="#1a5688"/>
                        <stop offset=".5" stop-color="#1b4b76"/>
                        <stop offset=".72" stop-color="#1d5489"/>
                        <stop offset="1" stop-color="#1f62a0"/>
                    </linearGradient>
                    <radialGradient id="lid" gradientUnits="userSpaceOnUse" cx="1085" cy="545" r="270">
                        <stop offset="0" stop-color="#276ca4"/>
                        <stop offset=".5" stop-color="#20649c"/>
                        <stop offset="1" stop-color="#185b94"/>
                    </radialGradient>
                    <linearGradient id="lidSide" x1="0" x2="1">
                        <stop offset=".55" stop-color="#154a72" stop-opacity="0"/>
                        <stop offset="1" stop-color="#154a72" stop-opacity=".9"/>
                    </linearGradient>
                    <linearGradient id="groove" x1="0" x2="1">
                        <stop offset="0" stop-color="#123f63"/>
                        <stop offset=".6" stop-color="#17507e"/>
                        <stop offset="1" stop-color="#17588b"/>
                    </linearGradient>
                    <radialGradient id="dome" cx=".45" cy=".65" r=".6">
                        <stop offset="0" stop-color="#3172a6"/>
                        <stop offset="1" stop-color="#1c5788"/>
                    </radialGradient>
                    <radialGradient id="ball" cx=".5" cy=".3" r=".7">
                        <stop offset="0" stop-color="#286da6"/>
                        <stop offset=".5" stop-color="#1a568b"/>
                        <stop offset="1" stop-color="#173d60"/>
                    </radialGradient>
                    <linearGradient id="handleLeft" x1="0" y1="0" x2="0" y2="1">
                        <stop offset="0" stop-color="#1f7fc2"/>
                        <stop offset=".25" stop-color="#1c6ba7"/>
                        <stop offset=".4" stop-color="#184f7b"/>
                        <stop offset="1" stop-color="#195887"/>
                    </linearGradient>
                    <linearGradient id="handleRight" x1="0" y1="0" x2="0" y2="1">
                        <stop offset="0" stop-color="#2581c2"/>
                        <stop offset=".35" stop-color="#195784"/>
                        <stop offset=".7" stop-color="#195b8c"/>
                        <stop offset="1" stop-color="#18486d"/>
                    </linearGradient>
                    <filter id="soft" x="-20%" y="-20%" width="140%" height="140%"><feGaussianBlur stdDeviation="9"/></filter>
                    <filter id="blur" x="-30%" y="-30%" width="160%" height="160%"><feGaussianBlur stdDeviation="3"/></filter>
                    <filter id="wide" x="-50%" y="-50%" width="200%" height="200%"><feGaussianBlur stdDeviation="20"/></filter>
                    <path id="bodyShape" d="M850 508C872 545 896 590 903 618C913 650 912 695 909 710C904 730 903 750 907 765C915 790 950 818 998 843C1035 858 1070 860 1095 859C1140 855 1180 835 1194 809C1200 795 1200 780 1204 765L1218 730C1224 712 1236 700 1245 690C1265 660 1300 640 1350 604L1370 560Z"/>
                    <clipPath id="bodyClip"><use href="#bodyShape"/></clipPath>
                    <clipPath id="lidClip"><ellipse cx="1099" cy="503" rx="245" ry="121" transform="rotate(12.200 1099 503)"/></clipPath>
                    <path id="shadow" d="M565 585C590 558 640 540 690 532C760 524 810 532 850 545L1000 600L1100 845L961 838C890 822 850 816 795 822C740 824 690 812 640 792C590 770 545 735 530 700C518 665 530 615 565 585Z"/>
                </defs>

                <rect x="0" y="0" width="2400" height="1400" fill="url(#floor)"/>
                <rect x="0" y="860" width="2400" height="200" fill="url(#front)"/>

                <g fill="#a5bed9" opacity=".6">
                    <path fill-rule="evenodd" d="M904 748C870 757 830 772 795 782C740 786 702 800 696 830C688 860 696 890 712 905C725 925 747 928 765 922C780 915 795 902 808 896L872 844L930 800ZM722 828C760 826 800 825 835 808C860 797 885 792 891 801C885 820 880 830 872 844C860 842 850 842 846 846C820 858 800 870 789 878C775 893 766 897 755 893C732 886 716 855 722 828Z"/>
                    <path d="M872 844L920 790L1190 830C1210 860 1235 880 1248 894C1280 940 1315 980 1337 1017H1299C1275 985 1215 940 1188 905C1200 940 1228 970 1235 1017H771C768 970 775 930 808 896Z" fill="#a6bdd4"/>
                </g>

                <path d="M486 650C490 600 560 545 680 530L700 800C580 780 485 720 486 650Z" fill="#5c6068" opacity=".3" filter="url(#soft)"/>
                <g filter="url(#soft)" fill="#5f646d" opacity=".95">
                    <use href="#shadow"/>
                    <path d="M428 546C460 546 520 562 600 582L560 612C510 596 455 578 428 556Z"/>
                    <ellipse cx="1170" cy="815" rx="42" ry="14"/>
                </g>
                <ellipse cx="1090" cy="850" rx="75" ry="14" fill="#5c6068" opacity=".55" filter="url(#blur)"/>
                <path d="M904 750C860 757 830 772 795 782C750 786 720 795 712 806C760 822 840 815 870 796L908 800Z" fill="#50596a" opacity=".3"/>

                <path fill="url(#handleLeft)" d="M852 420C845 395 838 380 822 369C808 359 788 357 769 360C752 365 740 380 735 400C729 425 727 445 733 462C740 485 765 510 792 536C810 560 830 585 847 610C865 635 880 650 897 669L912 685V636L902 606C890 585 870 568 847 545C835 525 825 515 810 499C795 480 772 468 765 445C760 425 760 410 764 400C768 388 780 386 790 388C812 396 815 420 832 458Z"/>
                <g fill="none" stroke-linecap="round" filter="url(#blur)">
                    <path stroke="#2c7db8" stroke-width="4" d="M752 480C780 510 810 540 850 595L892 650" opacity=".7"/>
                    <path stroke="#164263" stroke-width="6" d="M762 468C775 490 800 505 832 545" opacity=".7"/>
                    <path stroke="#2f8ccc" stroke-width="6" d="M748 400C755 370 795 364 816 388"/>
                    <path stroke="#174a73" stroke-width="8" d="M836 400L842 436"/>
                </g>

                <path fill="url(#handleRight)" d="M1343 606C1365 600 1389 582 1408 568C1430 561 1455 562 1467 572C1486 586 1494 605 1494 628C1492 660 1485 683 1475 694C1465 706 1450 714 1430 719C1400 723 1370 730 1347 738C1320 750 1290 764 1249 771C1230 774 1220 785 1200 781L1215 722C1235 735 1260 726 1286 722C1315 710 1345 698 1384 693C1405 691 1420 690 1430 685C1455 673 1468 650 1467 630C1466 610 1460 598 1442 595C1420 595 1395 610 1371 618C1350 625 1330 645 1298 661C1288 666 1275 665 1262 665Z"/>
                <g fill="none" stroke-linecap="round" filter="url(#blur)">
                    <path stroke="#2c78af" stroke-width="4" d="M1230 755C1280 750 1330 722 1380 712C1420 706 1460 698 1478 660"/>
                    <path stroke="#2f8ac8" stroke-width="7" d="M1400 583C1435 567 1480 580 1480 625"/>
                    <path stroke="#153f60" stroke-width="9" d="M1285 655C1310 645 1340 620 1365 606"/>
                </g>

                <use href="#bodyShape" fill="url(#body)"/>
                <g clip-path="url(#bodyClip)">
                    <path d="M930 600C990 650 1040 740 1085 850" fill="none" stroke="#183e60" stroke-width="45" opacity=".6" filter="url(#wide)"/>
                    <path d="M1130 660C1200 690 1170 740 1160 820" fill="none" stroke="#2168a9" stroke-width="60" opacity=".6" filter="url(#wide)"/>
                    <path d="M980 860C990 800 1010 780 1030 775C1060 790 1070 840 1070 870Z" fill="#1f5f91" opacity=".4" filter="url(#blur)"/>
                    <ellipse cx="1105" cy="507" rx="281" ry="138" transform="rotate(12.200 1105 507)" fill="#174a77" opacity=".35" filter="url(#blur)"/>
                </g>

                <g transform="rotate(12.200 1105 501)">
                    <ellipse cx="1105" cy="501" rx="278" ry="136" fill="#175b92"/>
                    <ellipse cx="1105" cy="499" rx="277" ry="134" fill="#1e74b5"/>
                    <ellipse cx="1102" cy="499" rx="257" ry="125" fill="#1b68a3"/>
                    <ellipse cx="1101" cy="501" rx="254" ry="124" fill="url(#groove)"/>
                    <ellipse cx="1100" cy="503" rx="250" ry="122" fill="#185b8f"/>
                    <ellipse cx="1100" cy="504" rx="246" ry="121" fill="url(#lid)"/>
                    <ellipse cx="1100" cy="504" rx="246" ry="121" fill="url(#lidSide)"/>
                </g>
                <g clip-path="url(#lidClip)">
                    <path d="M920 570C920 510 970 465 1080 460C1180 455 1260 520 1290 580C1260 640 1000 640 920 570Z" fill="#2b72aa" opacity=".4" filter="url(#soft)"/>
                    <path d="M872 500C885 491 910 488 932 490C920 510 917 530 914 554C895 540 880 520 872 500Z" fill="#3a7bb0" opacity=".55"/>
                    <path d="M1226 499C1240 498 1255 498 1264 502C1285 520 1300 545 1317 580C1300 570 1285 564 1272 556C1262 530 1245 515 1226 499Z" fill="#397099" opacity=".55"/>
                </g>
                <path d="M1008 399C1025 392 1065 393 1090 398L1070 413C1045 415 1015 410 1008 399Z" fill="#174a75" filter="url(#blur)"/>
                <path d="M1066 413C1078 402 1098 397 1116 396L1145 401C1168 410 1184 425 1185 437C1180 450 1155 455 1128 453C1100 448 1070 432 1066 413Z" fill="url(#dome)"/>
                <path d="M1066 415C1072 434 1100 450 1128 454C1155 456 1180 451 1185 437" fill="none" stroke="#3a7cb0" stroke-width="1"/>
                <path d="M1154 414C1162 418 1174 426 1178 434L1166 442C1160 432 1156 424 1154 414ZM1072 416L1084 408L1080 424Z" fill="#3e7eae" opacity=".6"/>
                <path d="M1116 399C1121 390 1120 384 1114 372L1159 372C1153 384 1146 392 1149 404C1138 410 1124 406 1116 399Z" fill="#18456d"/>
                <path d="M1111 358C1111 342 1121 334 1136 334C1151 334 1161 344 1161 359C1161 372 1151 383 1137 384C1121 384 1111 372 1111 358Z" fill="url(#ball)"/>
                <ellipse cx="1134" cy="346" rx="13" ry="5" fill="#3b80b6" opacity=".5" filter="url(#blur)"/>

                <g stroke-width="1.300">
                    <path stroke="#1b8a2c" d="M321 951L326 928"/>
                    <path stroke="#7a1f28" d="M321 951L345 959"/>
                    <path stroke="#14146e" stroke-width="2" d="M321 951L312 965"/>
                </g>
                <path fill="#0b8a1b" d="M327 916L333 932L325 934L318 930Z"/>
                <path fill="#cf2b2b" d="M347 952L356 962L342 966Z"/>
                <circle cx="312" cy="965" r="7" fill="#0a0a96"/>
                <text x="323" y="914" font-size="16" fill="#3fd45e">Y</text>
                <text x="358" y="972" font-size="16" fill="#d23c3c">X</text>
                <text x="298" y="985" font-size="16" fill="#3c3cd8">Z</text>

                <path d="M1891 314L1930 335V328L1895 305Z" fill="#6e7c92" opacity=".6" filter="url(#blur)"/>
                <path fill="#d3d7de" stroke="#8f97a6" stroke-dasharray="6 2" d="M1892 312L1898 263L1930 232V326Z"/>
                <path fill="none" stroke="#8f97a6" stroke-dasharray="6 3" d="M1898 263L1930 271"/>
                <text x="1898" y="297" font-size="10" font-weight="bold" fill="#9298a2" transform="rotate(12 1898 297)">FRO</text>
            </svg>
        `;
    }
}

class CadDocTabs extends HTMLElement {
    constructor() {
        super();
        this.attachShadow({ mode: 'open' });
    }

    connectedCallback() {
        this.shadowRoot.innerHTML = `
            <style>
                :host { display: flex; height: 30px; background: #d9d9d9; }
                a { display: flex; align-items: center; gap: 4px; width: 80px; padding-left: 7px; box-sizing: border-box; color: #6b6b6b; text-decoration: none; }
                div { display: flex; align-items: center; gap: 8px; width: 133px; padding-left: 10px; box-sizing: border-box; border-bottom: 3px solid #509fbd; background: #f4f4f4; color: #3787b4; }
                button { border: 0; padding: 0; background: none; }
                button cad-icon { width: 14px; height: 14px; }
            </style>
            <a href="#home"><cad-icon name="home"></cad-icon>Home</a>
            <div>Sugar Bowl.ipt<button aria-label="Close"><cad-icon name="close"></cad-icon></button></div>
        `;
    }
}

class CadApp extends HTMLElement {
    constructor() {
        super();
        this.attachShadow({ mode: 'open' });
    }

    connectedCallback() {
        this.shadowRoot.innerHTML = `
            <style>
                :host { display: flex; flex-direction: column; height: 100vh; overflow: hidden; }
                main { flex: 1; min-height: 0; display: grid; grid-template-columns: 253px 1fr; gap: 1px; background: #c3c6cb; }
                section { display: flex; flex-direction: column; min-width: 0; }
                cad-viewport { flex: 1; }
                footer { display: flex; align-items: center; height: 30px; padding-left: 1px; background: #eee; border-bottom: 3px solid #2e2b2e; }
                footer span { flex: 1; }
                footer i { align-self: stretch; width: 14px; border-left: 1px solid #cfcfcf; }
            </style>
            <cad-title-bar></cad-title-bar>
            <cad-tabs></cad-tabs>
            <cad-ribbon></cad-ribbon>
            <main>
                <cad-browser></cad-browser>
                <section>
                    <cad-viewport></cad-viewport>
                    <cad-doc-tabs></cad-doc-tabs>
                </section>
            </main>
            <footer><span>Ready</span><i></i></footer>
        `;
    }
}

customElements.define('cad-icon', CadIcon);
customElements.define('cad-tool', CadTool);
customElements.define('cad-panel', CadPanel);
customElements.define('cad-ribbon', CadRibbon);
customElements.define('cad-title-bar', CadTitleBar);
customElements.define('cad-tabs', CadTabs);
customElements.define('cad-browser', CadBrowser);
customElements.define('cad-viewport', CadViewport);
customElements.define('cad-doc-tabs', CadDocTabs);
customElements.define('cad-app', CadApp);
</script>
</body>
</html>
